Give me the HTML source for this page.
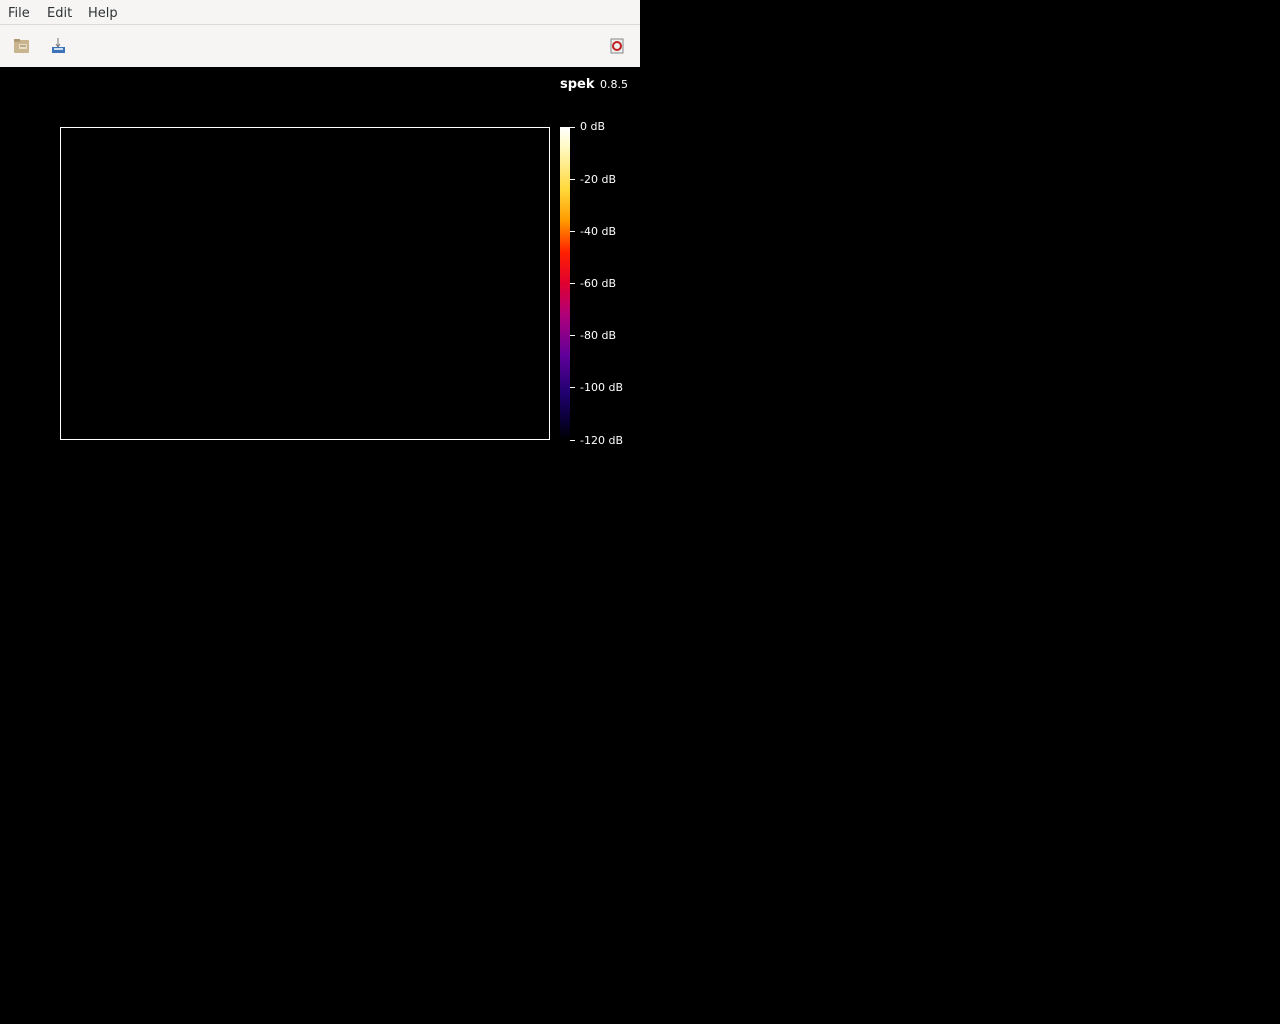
<!DOCTYPE html>
<html><head><meta charset="utf-8"><style>
body{margin:0;width:1280px;height:1024px;background:#000;position:relative;overflow:hidden;font-family:"DejaVu Sans","Liberation Sans",sans-serif;}
.menu{position:absolute;left:0;top:0;width:640px;height:24px;background:#f6f5f4;border-bottom:1px solid #dcdad5;font-size:13px;color:#2e3436;}
.menu span{position:absolute;top:6px;}
.tb{position:absolute;left:0;top:25px;width:640px;height:42px;background:#f6f5f4;}
.t{position:absolute;color:#fff;font-size:11px;white-space:nowrap;}
.tick{position:absolute;left:570px;width:5px;height:1px;background:#fff;}
</style></head><body>
<div class="menu"><span style="left:8px">File</span><span style="left:47px">Edit</span><span style="left:88px">Help</span></div>
<div class="tb">
<svg style="position:absolute;left:13px;top:13px" width="18" height="16"><rect x="1" y="2" width="15" height="13" rx="1" fill="#c8b48e"/><rect x="1" y="1" width="6" height="3" fill="#b09a72"/><rect x="6" y="6" width="8" height="5" fill="#e8dcc2"/><line x1="7" y1="8" x2="13" y2="8" stroke="#8a7858"/></svg>
<svg style="position:absolute;left:51px;top:12px" width="16" height="18"><path d="M7 1v8M5 7l2 3 2-3" stroke="#777" fill="none"/><rect x="1" y="10" width="13" height="6" fill="#3b72b8"/><rect x="3" y="11" width="9" height="2" fill="#cfe0f5"/></svg>
<svg style="position:absolute;left:610px;top:13px" width="15" height="16"><rect x="1" y="1" width="12" height="14" fill="#eee" stroke="#888"/><circle cx="7" cy="8" r="4" fill="none" stroke="#c02020" stroke-width="2"/></svg>
</div>
<div class="t" style="left:560px;top:77px;font-size:13px;font-weight:bold">spek <span style="font-weight:normal;font-size:11px;margin-left:1px">0.8.5</span></div>
<div style="position:absolute;left:60px;top:127px;width:488px;height:311px;border:1px solid #fff;"></div>
<div style="position:absolute;left:560px;top:127px;width:10px;height:313px;background:linear-gradient(#fff 0%,#fffbc8 6%,#ffd83a 20%,#ff9a00 30%,#ff2000 40%,#e00030 50%,#b0007a 60%,#60009a 73%,#200070 85%,#06002a 95%,#000 100%);"></div>
<div class="tick" style="top:127px"></div><div class="t" style="left:580px;top:120px">0 dB</div>
<div class="tick" style="top:179px"></div><div class="t" style="left:580px;top:173px">-20 dB</div>
<div class="tick" style="top:231px"></div><div class="t" style="left:580px;top:225px">-40 dB</div>
<div class="tick" style="top:283px"></div><div class="t" style="left:580px;top:277px">-60 dB</div>
<div class="tick" style="top:335px"></div><div class="t" style="left:580px;top:329px">-80 dB</div>
<div class="tick" style="top:387px"></div><div class="t" style="left:580px;top:381px">-100 dB</div>
<div class="tick" style="top:440px"></div><div class="t" style="left:580px;top:434px">-120 dB</div>
</body></html>
